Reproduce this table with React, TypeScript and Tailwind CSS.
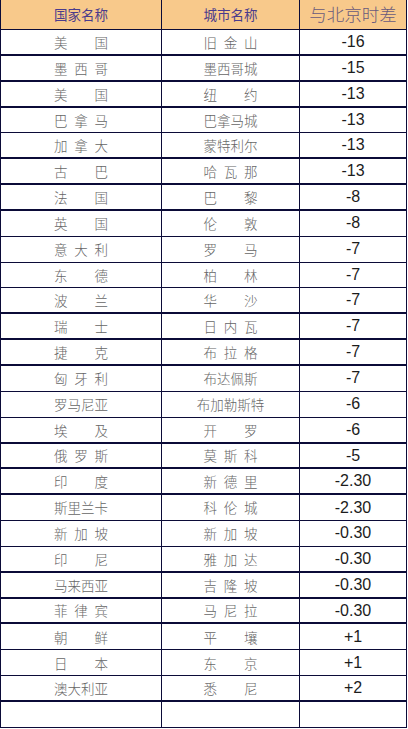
const rows: [string, string, string, boolean][] = [
  ['美国', '旧金山', '-16', true],
  ['墨西哥', '墨西哥城', '-15', true],
  ['美国', '纽约', '-13', true],
  ['巴拿马', '巴拿马城', '-13', false],
  ['加拿大', '蒙特利尔', '-13', true],
  ['古巴', '哈瓦那', '-13', true],
  ['法国', '巴黎', '-8', true],
  ['英国', '伦敦', '-8', false],
  ['意大利', '罗马', '-7', false],
  ['东德', '柏林', '-7', false],
  ['波兰', '华沙', '-7', true],
  ['瑞士', '日内瓦', '-7', true],
  ['捷克', '布拉格', '-7', true],
  ['匈牙利', '布达佩斯', '-7', false],
  ['罗马尼亚', '布加勒斯特', '-6', false],
  ['埃及', '开罗', '-6', true],
  ['俄罗斯', '莫斯科', '-5', true],
  ['印度', '新德里', '-2.30', true],
  ['斯里兰卡', '科伦城', '-2.30', false],
  ['新加坡', '新加坡', '-0.30', false],
  ['印尼', '雅加达', '-0.30', true],
  ['马来西亚', '吉隆坡', '-0.30', true],
  ['菲律宾', '马尼拉', '-0.30', true],
  ['朝鲜', '平壤', '+1', false],
  ['日本', '东京', '+1', false],
  ['澳大利亚', '悉尼', '+2', true],
  ['', '', '', false],
];

const cjk = "font-['Noto_Sans_CJK_SC',sans-serif]";

function Spread({ text }: { text: string }) {
  // short names are spread over the box like Excel's distributed align,
  // 4+ char names just sit centred
  if (text.length >= 4) {
    return <span className="whitespace-nowrap">{text}</span>;
  }
  return (
    <span className="block w-[54px] text-justify [text-align-last:justify] whitespace-nowrap">
      {text.split('').join(' ')}
    </span>
  );
}

export default function App() {
  return (
    <div className="w-[408px] h-[729px] bg-white overflow-hidden">
      <div className="w-[407px]">
        {/* header */}
        <div className="grid grid-cols-[162px_138px_107px] h-[30px] bg-[#f8c98b] border-b border-[#0b0b38]">
          <div className="flex items-center justify-center border-l border-r border-[#0b0b38]">
            <span className={`${cjk} text-[13.5px] text-[#4a3b8c]`}>国家名称</span>
          </div>
          <div className="flex items-center justify-center border-r border-[#0b0b38]">
            <span className={`${cjk} text-[13.5px] text-[#4a3b8c]`}>城市名称</span>
          </div>
          <div className="flex items-center justify-center border-r border-[#0b0b38]">
            <span className={`${cjk} text-[17.5px] text-[#685a7c] font-light`}>
              与北京时差
            </span>
          </div>
        </div>

        {rows.map(([country, city, diff, thick], i) => (
          <div
            key={i}
            className={`grid grid-cols-[162px_138px_107px] h-[25.85px] border-[#0b0b38] ${
              thick ? 'border-b-2' : 'border-b'
            }`}
          >
            <div className="flex items-center justify-center border-l border-r border-[#0b0b38]">
              <span className={`${cjk} text-[13.5px] text-[#666] font-light`}>
                <Spread text={country} />
              </span>
            </div>
            <div className="flex items-center justify-center border-r border-[#0b0b38]">
              <span className={`${cjk} text-[13.5px] text-[#666] font-light`}>
                <Spread text={city} />
              </span>
            </div>
            <div className="flex items-center justify-center border-r border-[#0b0b38]">
              <span className="font-['Liberation_Sans',Arial,sans-serif] text-[16px] text-[#1c1c1c]">
                {diff}
              </span>
            </div>
          </div>
        ))}
      </div>
    </div>
  );
}
